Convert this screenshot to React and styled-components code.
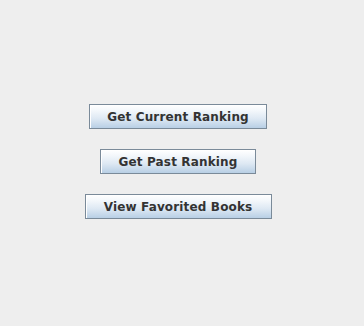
import React from 'react';
import styled, { createGlobalStyle } from 'styled-components';

const Global = createGlobalStyle`
    html, body {
        margin: 0;
        padding: 0;
        background: #eeeeee;
    }
`;

const Panel = styled.div`
    width: 356px;
    height: 326px;
    display: flex;
    flex-direction: column;
    align-items: center;
    padding-top: 104px;
    gap: 20px;
    box-sizing: border-box;
    background: #eeeeee;
`;

const Button = styled.button`
    width: ${props => props.w}px;
    height: 25px;
    box-sizing: border-box;
    border: 1px solid #7a8a99;
    background: linear-gradient(to bottom, #ffffff 0%, #f3f7fb 25%, #dde8f3 60%, #b8cfe5 100%);
    box-shadow: inset 1px 1px 0 #ffffff;
    font-family: "DejaVu Sans", sans-serif;
    font-weight: bold;
    font-size: 12px;
    letter-spacing: 0.15px;
    color: #333333;
    padding: 0;
    cursor: pointer;
`;

const App = () => {
    return (
        <div>
            <Global />
            <Panel>
                <Button w={178}>Get Current Ranking</Button>
                <Button w={156}>Get Past Ranking</Button>
                <Button w={187}>View Favorited Books</Button>
            </Panel>
        </div>
    );
};

export default App;
